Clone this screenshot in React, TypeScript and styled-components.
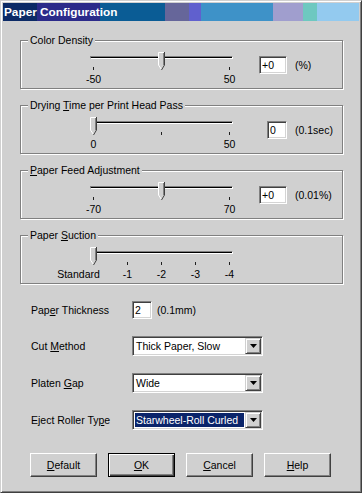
import React from "react";
import styled, { createGlobalStyle } from "styled-components";

const BG = "#d0d0d0";

const Global = createGlobalStyle`
  html, body { margin: 0; padding: 0; background: ${BG}; }
  body {
    font-family: "Liberation Sans", Arial, sans-serif;
    font-size: 10.5px;
    color: #000;
  }
`;

const Window = styled.div`
  width: 362px;
  height: 493px;
  box-sizing: border-box;
  border: 1px solid;
  border-color: ${BG} #404040 #404040 ${BG};
  box-shadow: inset 1px 1px 0 #fff, inset -1px -1px 0 #808080;
  padding: 2px;
  background: ${BG};
  display: flex;
  flex-direction: column;
`;

const TitleBar = styled.div`
  height: 18px;
  flex: none;
  display: flex;
  align-items: center;
  padding-left: 1px;
  color: #fff;
  font-weight: bold;
  font-size: 11.8px;
  white-space: nowrap;
  background: linear-gradient(
    to right,
    #0c2a66 0px, #0c2a66 34px,
    #2b2a8a 34px, #2b2a8a 97px,
    #0a5c95 97px, #0a5c95 162px,
    #66669a 162px, #66669a 186px,
    #6060ce 186px, #6060ce 198px,
    #3e92c8 198px, #3e92c8 270px,
    #a09ece 270px, #a09ece 300px,
    #6ec8c0 300px, #6ec8c0 314px,
    #93caef 314px, #93caef 100%
  );
`;

const Body = styled.div`
  display: flex;
  flex-direction: column;
  padding: 19px 0 0 17px;
`;

const Groups = styled.div`
  display: flex;
  flex-direction: column;
  gap: 16px;
`;

const GroupBox = styled.div`
  position: relative;
  width: 323px;
  height: 49px;
  box-sizing: border-box;
  border: 1px solid #808080;
  box-shadow: inset 1px 1px 0 #fff, 1px 1px 0 #fff;
  padding-top: 11px;
`;

const Legend = styled.span`
  position: absolute;
  top: -7px;
  left: 7px;
  padding: 0 2px;
  line-height: 13px;
  background: ${BG};
  white-space: nowrap;
`;

const Key = styled.span`
  text-decoration: underline;
  text-underline-offset: 1px;
`;

const SliderRow = styled.div`
  display: flex;
  align-items: flex-start;
  margin-left: 69px;
`;

const SliderBlock = styled.div`
  width: 143px;
  display: flex;
  flex-direction: column;
`;

const TrackArea = styled.div`
  position: relative;
  height: 15px;
`;

const Track = styled.div`
  margin-top: 4px;
  height: 1px;
  background: #000;
  border-top: 1px solid #808080;
  border-bottom: 1px solid #fff;
  border-left: 1px solid #808080;
  border-right: 1px solid #fff;
`;

const ThumbSvg = styled.svg`
  position: absolute;
  top: 0;
  display: block;
`;

const TickRow = styled.div`
  display: flex;
  justify-content: space-between;
  padding: 0 3px 0 3px;
`;

const TickItem = styled.div`
  width: 1px;
  display: flex;
  flex-direction: column;
  align-items: center;
`;

const Tick = styled.div`
  width: 1px;
  height: 3px;
  background: #202020;
`;

const TickLabel = styled.span<{ $shift?: number }>`
  margin-top: 4px;
  line-height: 11px;
  white-space: nowrap;
  transform: translateX(${(p) => p.$shift ?? 0}px);
`;

const ValueArea = styled.div`
  display: flex;
  align-items: center;
  margin-top: 4px;
`;

const EditSlot = styled.div`
  width: 54px;
  display: flex;
  justify-content: flex-end;
`;

const EditBox = styled.div<{ $w: number }>`
  width: ${(p) => p.$w}px;
  height: 18px;
  box-sizing: border-box;
  border: 1px solid;
  border-color: #808080 #fff #fff #808080;
  box-shadow: inset 1px 1px 0 #404040, inset -1px -1px 0 #d4d4d4;
  background: #fff;
  padding-left: 2px;
  line-height: 16px;
  white-space: nowrap;
`;

const Unit = styled.span`
  margin-left: 8px;
  white-space: nowrap;
`;

const Fields = styled.div`
  display: flex;
  flex-direction: column;
  gap: 17px;
  margin: 17px 0 0 11px;
`;

const FieldRow = styled.div`
  display: flex;
  align-items: center;
`;

const FieldLabel = styled.span`
  width: 101px;
  white-space: nowrap;
`;

const Combo = styled.div`
  width: 131px;
  height: 20px;
  box-sizing: border-box;
  border: 1px solid;
  border-color: #808080 #fff #fff #808080;
  box-shadow: inset 1px 1px 0 #404040, inset -1px -1px 0 #d4d4d4;
  background: #fff;
  padding: 1px;
  display: flex;
  align-items: stretch;
`;

const ComboText = styled.div<{ $selected?: boolean }>`
  flex: 1;
  margin: 1px 1px 1px 1px;
  padding-left: 1px;
  display: flex;
  align-items: center;
  white-space: nowrap;
  background: ${(p) => (p.$selected ? "#0a246a" : "transparent")};
  color: ${(p) => (p.$selected ? "#fff" : "#000")};
`;

const DropButton = styled.div`
  width: 16px;
  box-sizing: border-box;
  background: ${BG};
  border: 1px solid;
  border-color: ${BG} #404040 #404040 ${BG};
  box-shadow: inset 1px 1px 0 #fff, inset -1px -1px 0 #808080;
  display: flex;
  align-items: center;
  justify-content: center;
`;

const Buttons = styled.div`
  display: flex;
  gap: 11px;
  margin: 23px 0 0 10px;
`;

const Button = styled.div<{ $default?: boolean }>`
  width: 67px;
  height: 24px;
  box-sizing: border-box;
  background: ${BG};
  display: flex;
  align-items: center;
  justify-content: center;
  border: 1px solid;
  border-color: ${(p) => (p.$default ? "#000" : "#fff #404040 #404040 #fff")};
  box-shadow: ${(p) =>
    p.$default
      ? "inset 1px 1px 0 #fff, inset -1px -1px 0 #404040, inset -2px -2px 0 #808080"
      : "inset -1px -1px 0 #808080"};
`;

function Thumb({ frac }: { frac: number }) {
  return (
    <ThumbSvg
      width="7"
      height="19"
      viewBox="0 0 7 19"
      style={{ left: Math.round(frac * 136) }}
    >
      <polygon points="0,0 7,0 7,13 3.5,18.5 0,13" fill={BG} />
      <polyline points="0.5,13 0.5,0.5 6,0.5" fill="none" stroke="#fff" />
      <line x1="0.5" y1="13" x2="3.5" y2="17.5" stroke="#fff" />
      <line x1="5.5" y1="1" x2="5.5" y2="13" stroke="#808080" />
      <polyline points="6.5,0 6.5,13 3.5,18" fill="none" stroke="#404040" />
    </ThumbSvg>
  );
}

type TickDef = { label?: string; shift?: number };

function Slider({ frac, ticks }: { frac: number; ticks: TickDef[] }) {
  return (
    <SliderBlock>
      <TrackArea>
        <Track />
        <Thumb frac={frac} />
      </TrackArea>
      <TickRow>
        {ticks.map((t, i) => (
          <TickItem key={i}>
            <Tick />
            {t.label !== undefined && <TickLabel $shift={t.shift}>{t.label}</TickLabel>}
          </TickItem>
        ))}
      </TickRow>
    </SliderBlock>
  );
}

function SliderGroup({
  title,
  frac,
  ticks,
  value,
  editWidth,
  unit,
}: {
  title: React.ReactNode;
  frac: number;
  ticks: TickDef[];
  value?: string;
  editWidth?: number;
  unit?: string;
}) {
  return (
    <GroupBox>
      <Legend>{title}</Legend>
      <SliderRow>
        <Slider frac={frac} ticks={ticks} />
        {value !== undefined && (
          <ValueArea>
            <EditSlot>
              <EditBox $w={editWidth ?? 28}>{value}</EditBox>
            </EditSlot>
            <Unit>{unit}</Unit>
          </ValueArea>
        )}
      </SliderRow>
    </GroupBox>
  );
}

function Arrow() {
  return (
    <svg width="7" height="4" viewBox="0 0 7 4">
      <polygon points="0,0 7,0 3.5,4" fill="#000" />
    </svg>
  );
}

function ComboBox({ text, selected }: { text: string; selected?: boolean }) {
  return (
    <Combo>
      <ComboText $selected={selected}>{text}</ComboText>
      <DropButton>
        <Arrow />
      </DropButton>
    </Combo>
  );
}

export default function App() {
  return (
    <>
      <Global />
      <Window>
        <TitleBar>Paper Configuration</TitleBar>
        <Body>
          <Groups>
            <SliderGroup
              title="Color Density"
              frac={0.5}
              ticks={[{ label: "-50" }, {}, { label: "50" }]}
              value="+0"
              editWidth={28}
              unit="(%)"
            />
            <SliderGroup
              title={
                <>
                  Drying <Key>T</Key>ime per Print Head Pass
                </>
              }
              frac={0}
              ticks={[{ label: "0" }, {}, { label: "50" }]}
              value="0"
              editWidth={20}
              unit="(0.1sec)"
            />
            <SliderGroup
              title={
                <>
                  <Key>P</Key>aper Feed Adjustment
                </>
              }
              frac={0.5}
              ticks={[{ label: "-70" }, {}, { label: "70" }]}
              value="+0"
              editWidth={28}
              unit="(0.01%)"
            />
            <SliderGroup
              title={
                <>
                  Paper <Key>S</Key>uction
                </>
              }
              frac={0}
              ticks={[
                { label: "Standard", shift: -15 },
                { label: "-1" },
                { label: "-2" },
                { label: "-3" },
                { label: "-4" },
              ]}
            />
          </Groups>
          <Fields>
            <FieldRow>
              <FieldLabel>
                Pap<Key>e</Key>r Thickness
              </FieldLabel>
              <EditBox $w={20}>2</EditBox>
              <Unit style={{ marginLeft: 5 }}>(0.1mm)</Unit>
            </FieldRow>
            <FieldRow>
              <FieldLabel>
                Cut <Key>M</Key>ethod
              </FieldLabel>
              <ComboBox text="Thick Paper, Slow" />
            </FieldRow>
            <FieldRow>
              <FieldLabel>
                Platen <Key>G</Key>ap
              </FieldLabel>
              <ComboBox text="Wide" />
            </FieldRow>
            <FieldRow>
              <FieldLabel>
                Eject Roller Ty<Key>p</Key>e
              </FieldLabel>
              <ComboBox text="Starwheel-Roll Curled" selected />
            </FieldRow>
          </Fields>
          <Buttons>
            <Button>
              <span>
                <Key>D</Key>efault
              </span>
            </Button>
            <Button $default>
              <span>
                <Key>O</Key>K
              </span>
            </Button>
            <Button>
              <span>
                <Key>C</Key>ancel
              </span>
            </Button>
            <Button>
              <span>
                <Key>H</Key>elp
              </span>
            </Button>
          </Buttons>
        </Body>
      </Window>
    </>
  );
}
